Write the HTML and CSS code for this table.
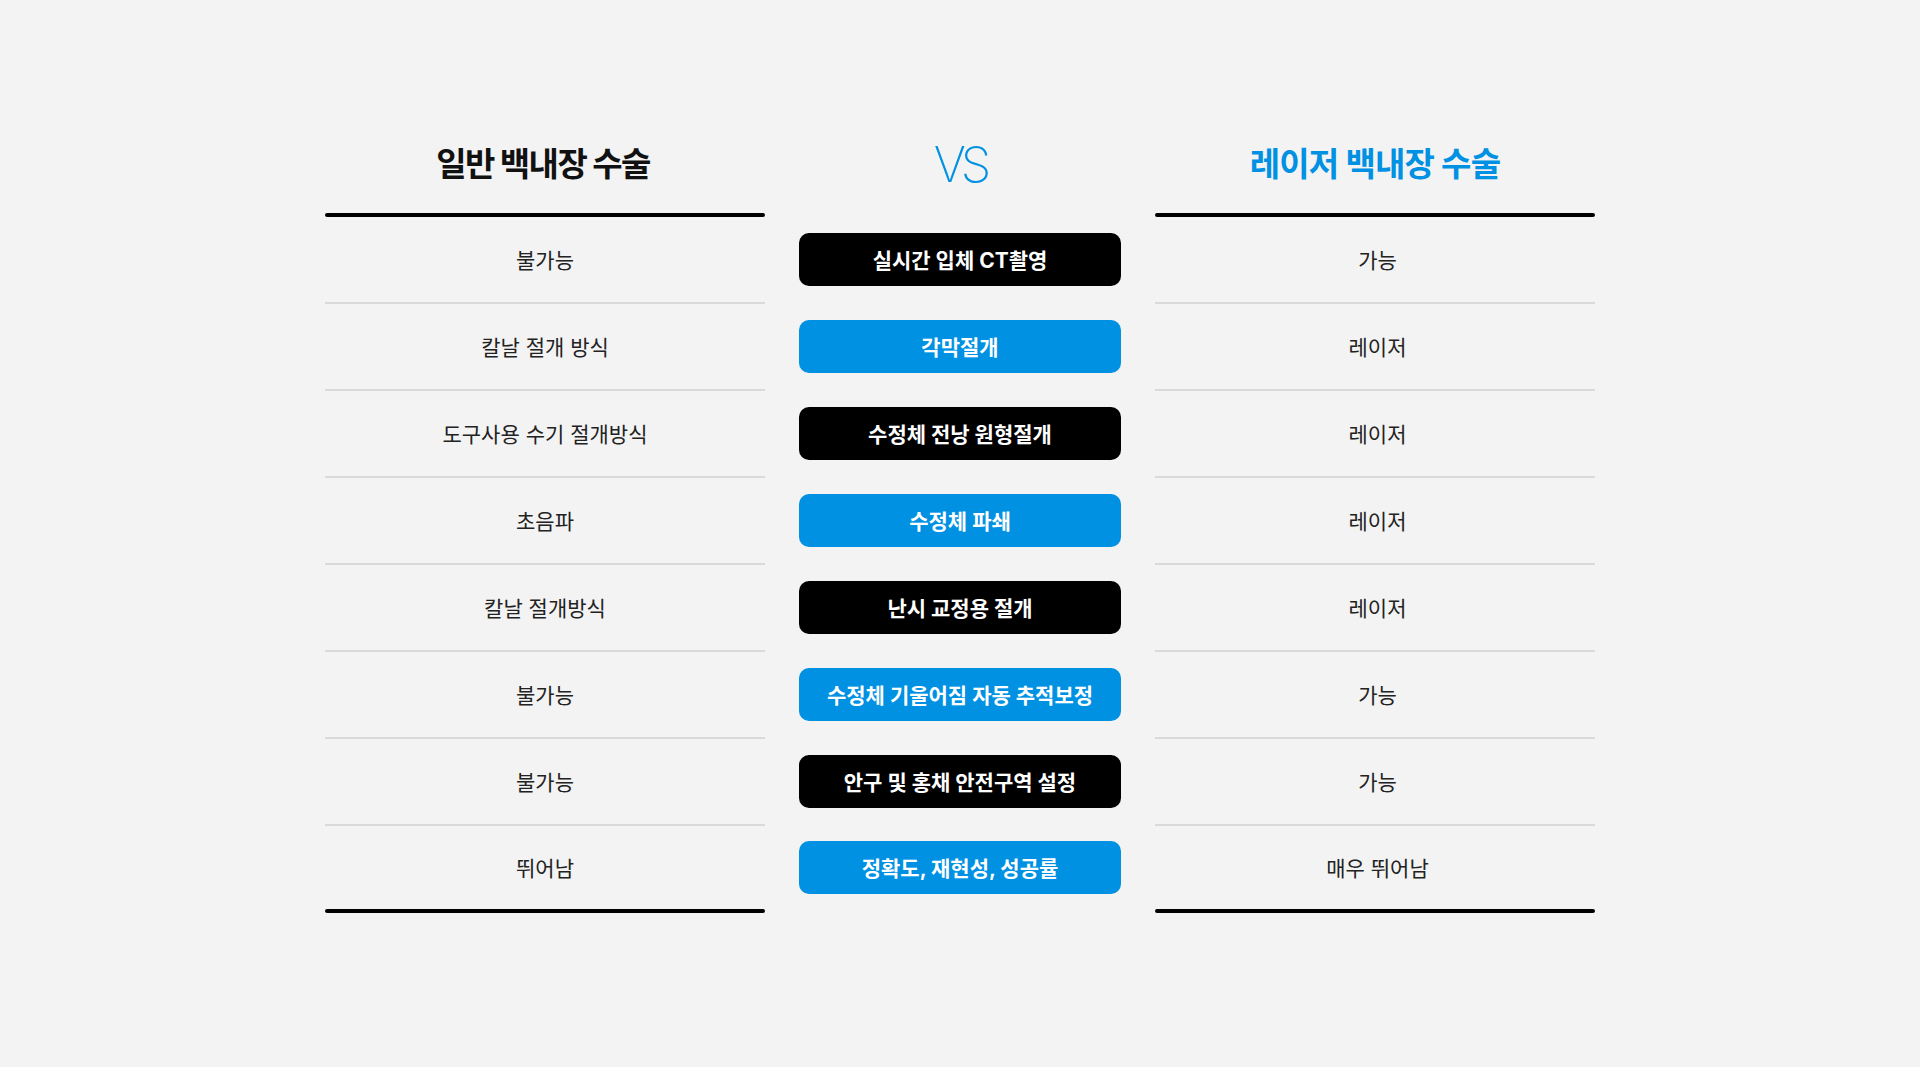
FILE: index.html
```html
<!DOCTYPE html>
<html lang="ko">
<head>
<meta charset="utf-8">
<title>일반 백내장 수술 VS 레이저 백내장 수술</title>
<link rel="stylesheet" href="styles.css">
</head>
<body>
<main class="compare">
  <section class="col side">
    <h2 class="head head-left">일반 백내장 수술</h2>
    <div class="rule"></div>
    <ul class="list">
      <li class="cell">불가능</li>
      <li class="cell">칼날 절개 방식</li>
      <li class="cell">도구사용 수기 절개방식</li>
      <li class="cell">초음파</li>
      <li class="cell">칼날 절개방식</li>
      <li class="cell">불가능</li>
      <li class="cell">불가능</li>
      <li class="cell">뛰어남</li>
    </ul>
    <div class="rule"></div>
  </section>

  <section class="col mid">
    <div class="head vs">VS</div>
    <div class="rule-space"></div>
    <ul class="list">
      <li class="cell"><span class="pill dark">실시간 입체 CT촬영</span></li>
      <li class="cell"><span class="pill blue">각막절개</span></li>
      <li class="cell"><span class="pill dark">수정체 전낭 원형절개</span></li>
      <li class="cell"><span class="pill blue">수정체 파쇄</span></li>
      <li class="cell"><span class="pill dark">난시 교정용 절개</span></li>
      <li class="cell"><span class="pill blue">수정체 기울어짐 자동 추적보정</span></li>
      <li class="cell"><span class="pill dark">안구 및 홍채 안전구역 설정</span></li>
      <li class="cell"><span class="pill blue">정확도, 재현성, 성공률</span></li>
    </ul>
  </section>

  <section class="col side right">
    <h2 class="head head-right">레이저 백내장 수술</h2>
    <div class="rule"></div>
    <ul class="list">
      <li class="cell">가능</li>
      <li class="cell">레이저</li>
      <li class="cell">레이저</li>
      <li class="cell">레이저</li>
      <li class="cell">레이저</li>
      <li class="cell">가능</li>
      <li class="cell">가능</li>
      <li class="cell">매우 뛰어남</li>
    </ul>
    <div class="rule"></div>
  </section>
</main>
</body>
</html>
```

FILE: styles.css
```css
* { box-sizing: border-box; }

html, body {
  margin: 0;
  padding: 0;
  background: #f3f3f3;
}

body {
  font-family: Inter, "Noto Sans CJK KR", sans-serif;
  color: #222;
  height: 1067px;
  overflow: hidden;
}

.compare {
  display: flex;
  justify-content: center;
  gap: 34px;
  padding-top: 134px;
}

.col {
  display: flex;
  flex-direction: column;
}

.side { width: 440px; }
.mid { width: 322px; }

.head {
  height: 60px;
  margin: 0 0 19px 0;
  display: flex;
  align-items: center;
  justify-content: center;
  font-size: 33px;
  font-weight: 700;
  line-height: 1;
}

.head-left {
  color: #111;
  letter-spacing: -1.6px;
  padding-right: 4px;
}

.head-right {
  color: #0091e3;
  letter-spacing: -0.8px;
}

.vs {
  font-family: Inter, sans-serif;
  font-weight: 200;
  font-size: 49px;
  color: #0091e3;
  letter-spacing: -5px;
}

.rule {
  height: 4px;
  background: #000;
  border-radius: 2px;
}

.rule-space { height: 4px; }

.list {
  list-style: none;
  margin: 0;
  padding: 0;
}

.cell {
  height: 87px;
  border-bottom: 2px solid #d9d9d9;
  display: flex;
  align-items: center;
  justify-content: center;
  font-size: 21px;
  font-weight: 400;
  color: #222;
  padding-bottom: 1px;
}

.right .cell {
  padding-left: 5px;
}

.cell:last-child {
  height: 83px;
  border-bottom: 0;
}

.mid .cell {
  border-bottom-color: transparent;
  padding-bottom: 0;
}

.pill {
  width: 322px;
  height: 53px;
  border-radius: 10px;
  display: flex;
  align-items: center;
  justify-content: center;
  color: #fff;
  font-size: 21px;
  font-weight: 700;
  padding-bottom: 2px;
}

.pill.dark { background: #000; }
.pill.blue { background: #0091e3; }
```
